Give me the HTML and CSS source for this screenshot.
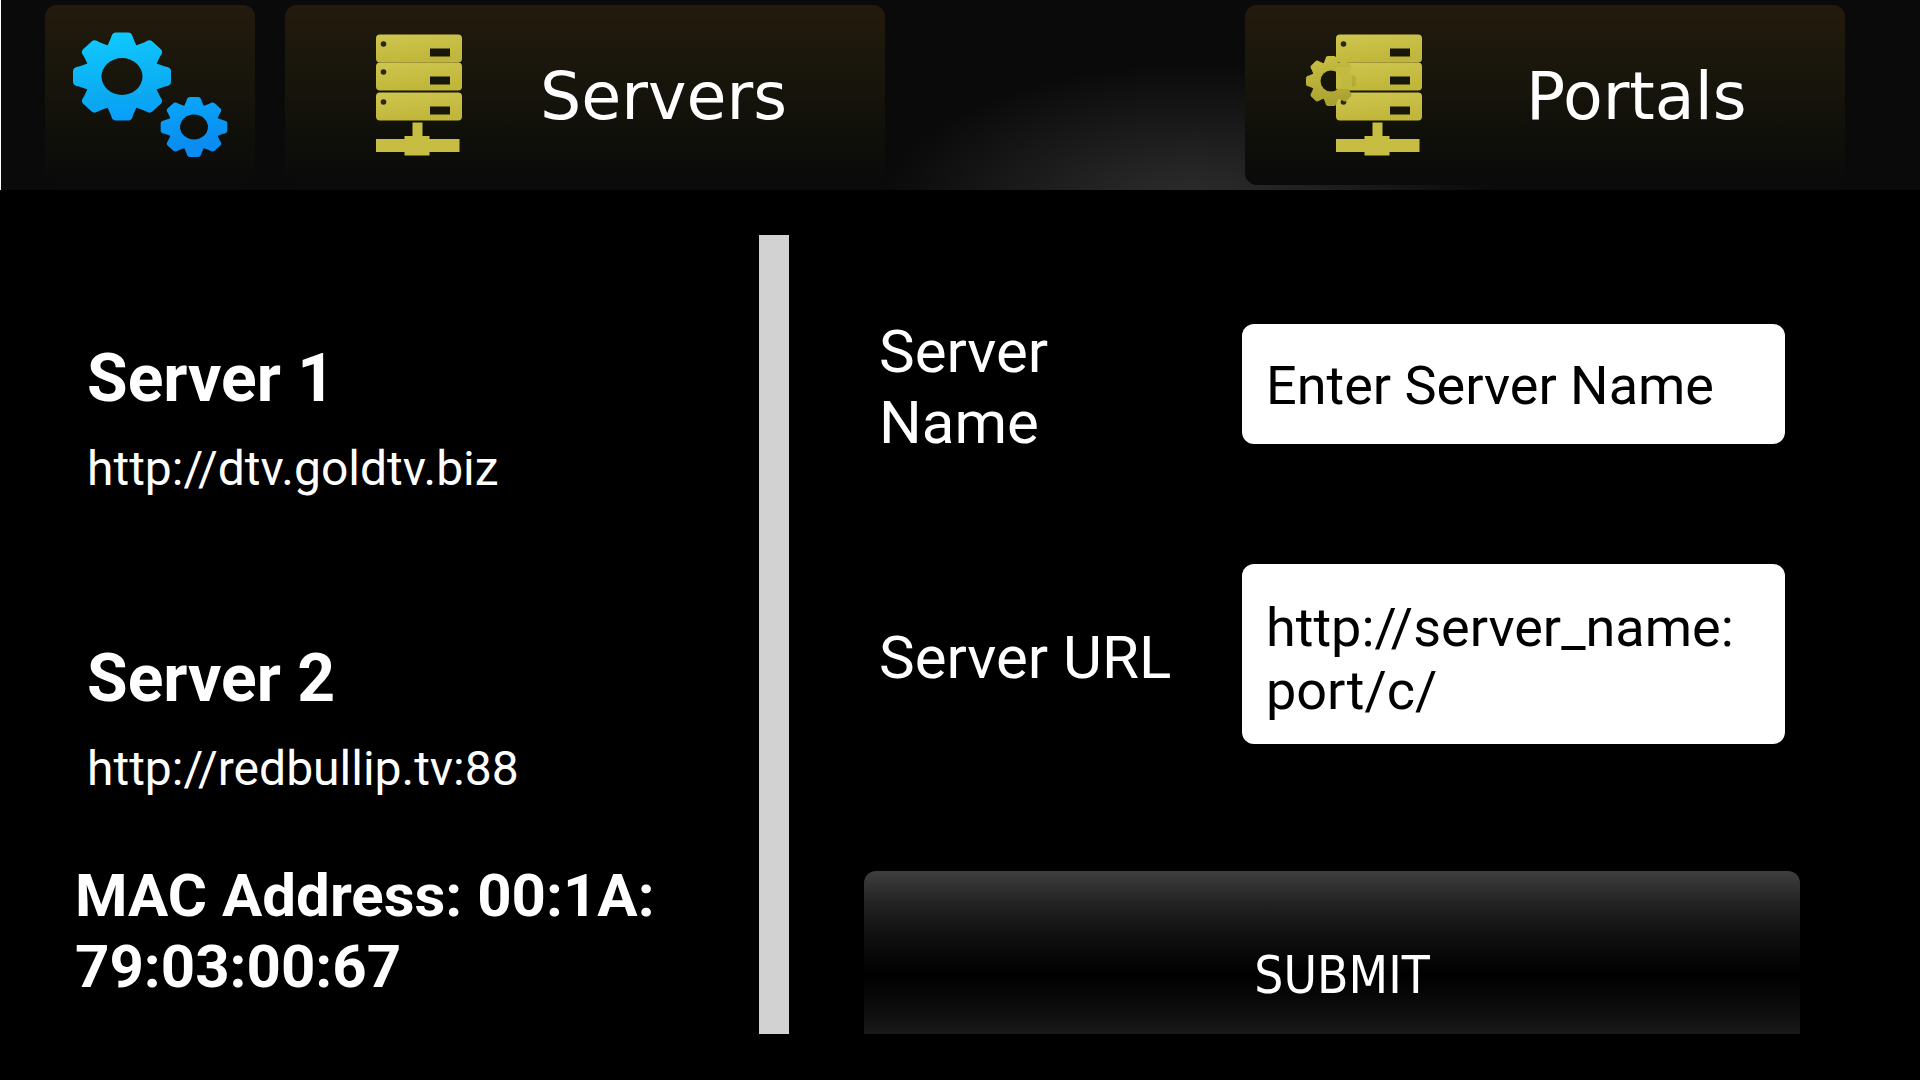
FILE: index.html
```html
<!DOCTYPE html>
<html lang="en">
<head>
<meta charset="utf-8">
<meta name="viewport" content="width=device-width, initial-scale=1">
<title>Servers</title>
<link rel="stylesheet" href="styles.css">
</head>
<body>
<header class="topbar">
  <button class="tab tab-settings" type="button" aria-label="Settings">
    <svg class="gears" viewBox="0 0 156 126" width="156" height="126" aria-hidden="true">
      <defs>
        <path id="tooth" d="M-15-33 L-11-43 Q-10-49-6-49 H6 Q10-49 11-43 L15-33Z"/>
        <g id="gear">
          <circle r="37"/>
          <use href="#tooth"/>
          <use href="#tooth" transform="rotate(45)"/>
          <use href="#tooth" transform="rotate(90)"/>
          <use href="#tooth" transform="rotate(135)"/>
          <use href="#tooth" transform="rotate(180)"/>
          <use href="#tooth" transform="rotate(225)"/>
          <use href="#tooth" transform="rotate(270)"/>
          <use href="#tooth" transform="rotate(315)"/>
          <circle r="20.5" fill="#000"/>
        </g>
        <mask id="gearsMask" maskUnits="userSpaceOnUse" x="0" y="0" width="156" height="126">
          <use href="#gear" fill="#fff" transform="translate(50 44.500) scale(1 .9)"/>
          <use href="#gear" fill="#fff" transform="translate(122 95) scale(.68 .61)"/>
        </mask>
        <linearGradient id="blue" x1="0" y1="0" x2=".15" y2="1">
          <stop offset="0" stop-color="#10ccff"/>
          <stop offset=".6" stop-color="#0aa6f0"/>
          <stop offset=".62" stop-color="#08a6fb"/>
          <stop offset="1" stop-color="#0a8cf0"/>
        </linearGradient>
      </defs>
      <rect width="156" height="126" fill="url(#blue)" mask="url(#gearsMask)"/>
    </svg>
  </button>
  <button class="tab tab-servers" type="button">
    <svg class="rack" viewBox="0 0 116 130" width="116" height="130" aria-hidden="true">
      <defs>
        <linearGradient id="gold" x1="0" y1="0" x2=".3" y2="1">
          <stop offset="0" stop-color="#cfc650"/>
          <stop offset="1" stop-color="#c0b639"/>
        </linearGradient>
        <g id="unit">
          <rect x="30" width="86" height="28" rx="4" fill="url(#gold)"/>
          <circle cx="37.500" cy="9.500" r="2.800" fill="#2c260c"/>
          <rect x="84" y="14" width="20" height="8" fill="#18150a"/>
        </g>
        <g id="rackShape">
          <use href="#unit" y="4.500"/>
          <use href="#unit" y="32.500"/>
          <use href="#unit" y="62.500"/>
          <path d="M66.500 92.500h10V106h7v3h30v13H83.500v3.500h-25V122H30v-13h28.500v-3h8z" fill="#c6bd42"/>
        </g>
      </defs>
      <use href="#rackShape"/>
    </svg>
    <span class="tab-label">Servers</span>
  </button>
  <button class="tab tab-portals" type="button">
    <svg class="rack" viewBox="0 0 116 130" width="116" height="130" aria-hidden="true">
      <defs>
        <mask id="cogMask" maskUnits="userSpaceOnUse" x="-4" y="20" width="60" height="62">
          <use href="#gear" fill="#fff" transform="translate(25 51) scale(.51)"/>
        </mask>
        <linearGradient id="cogFill" x1=".4" y1="0" x2=".6" y2="1">
          <stop offset="0" stop-color="#c8bf42"/>
          <stop offset="1" stop-color="#a89e30"/>
        </linearGradient>
      </defs>
      <use href="#rackShape"/>
      <rect x="-2" y="25" width="54" height="52" fill="url(#cogFill)" mask="url(#cogMask)"/>
      <rect x="30" y="37" width="16" height="22" fill="#c6bd42" opacity=".75"/>
    </svg>
    <span class="tab-label">Portals</span>
  </button>
</header>

<main class="content">
  <section class="servers">
    <ul class="server-list">
      <li class="server">
        <h2 class="server-name">Server 1</h2>
        <p class="server-url">http://dtv.goldtv.biz</p>
      </li>
      <li class="server">
        <h2 class="server-name">Server 2</h2>
        <p class="server-url">http://redbullip.tv:88</p>
      </li>
    </ul>
    <p class="mac">MAC Address: 00:1A:<br>79:03:00:67</p>
  </section>
  <div class="divider"></div>
  <form class="form">
    <div class="form-row">
      <label class="form-label" for="name">Server Name</label>
      <input class="field field-line" id="name" type="text" placeholder="Enter Server Name">
    </div>
    <div class="form-row">
      <label class="form-label" for="url">Server URL</label>
      <textarea class="field" id="url" rows="2" spellcheck="false">http://server_name:port/c/</textarea>
    </div>
    <button class="submit" type="submit">SUBMIT</button>
  </form>
</main>
</body>
</html>
```
FILE: styles.css
```css
* {
  box-sizing: border-box;
}

body {
  margin: 0;
  background: #000;
  color: #fff;
  font-family: Roboto, sans-serif;
}

h2,
p,
ul {
  margin: 0;
  padding: 0;
}

button {
  border: 0;
  color: inherit;
}

.topbar {
  display: flex;
  gap: 30px;
  min-height: 190px;
  padding: 5px 75px 5px 44px;
  border-left: 1px solid #fff;
  background: radial-gradient(310px 145px at 62% 110%, #2e2e2e, #262626 25%, #0a0a0a) #0a0a0a;
}

.tab {
  display: flex;
  align-items: center;
  padding: 0 0 0 61px;
  border-radius: 12px;
  background: linear-gradient(#241b0c, #1b170c 30%, #10100a 70%, #0a0a0a);
  font-family: "DejaVu Sans", sans-serif;
  font-size: 65px;
}

.tab svg {
  flex: none;
  overflow: visible;
}

.tab-settings {
  flex: 0 0 210px;
  padding: 0 0 0 27px;
}

.tab-servers {
  flex: 0 1 600px;
  gap: 78px;
}

.tab-portals {
  flex: 0 1 600px;
  gap: 104px;
  margin-left: auto;
}

.tab-label {
  padding-top: 2px;
}

.content {
  display: grid;
  grid-template-columns: minmax(0, 759fr) 30px minmax(0, 1131fr);
  padding: 45px 0 46px;
}

.servers {
  padding: 105px 0 0 75px;
}

.server-list {
  display: grid;
  gap: 143px;
  padding-left: 12px;
  list-style: none;
}

.server-name {
  font-size: 66px;
  line-height: 78px;
}

.server-url {
  padding-top: 23px;
  font-size: 48px;
  line-height: 56px;
}

.mac {
  padding-top: 63px;
  font-size: 60px;
  font-weight: 700;
  line-height: 71px;
}

.divider {
  background: #d2d2d2;
}

.form {
  padding: 75px 120px 0 75px;
}

.form-row {
  display: grid;
  grid-template-columns: minmax(0, 363fr) minmax(0, 543fr);
  align-items: center;
  padding: 0 15px;
  margin-bottom: 106px;
}

.form-label {
  padding: 6px 60px 0 0;
  font-size: 60px;
  line-height: 71px;
}

.field {
  display: block;
  width: 100%;
  padding: 32px 36px 22px 24px;
  border: 0;
  border-radius: 12px;
  background: #fff;
  color: #000;
  font-family: inherit;
  font-size: 54px;
  line-height: 63px;
  resize: none;
  overflow: hidden;
  word-break: break-all;
}

.field-line {
  height: 120px;
  padding: 30px 36px 28px 24px;
}

.field::placeholder {
  color: #000;
  opacity: 1;
}

.submit {
  display: block;
  width: 100%;
  height: 163px;
  margin-top: 127px;
  padding: 46px 0 0 20px;
  border-radius: 12px 12px 0 0;
  background: linear-gradient(#3e3e3e, #222 20%, #111 38%, #000 63%, #080808 78%, #191919);
  font-family: "DejaVu Sans Condensed", "DejaVu Sans", sans-serif;
  font-size: 51px;
}
```
